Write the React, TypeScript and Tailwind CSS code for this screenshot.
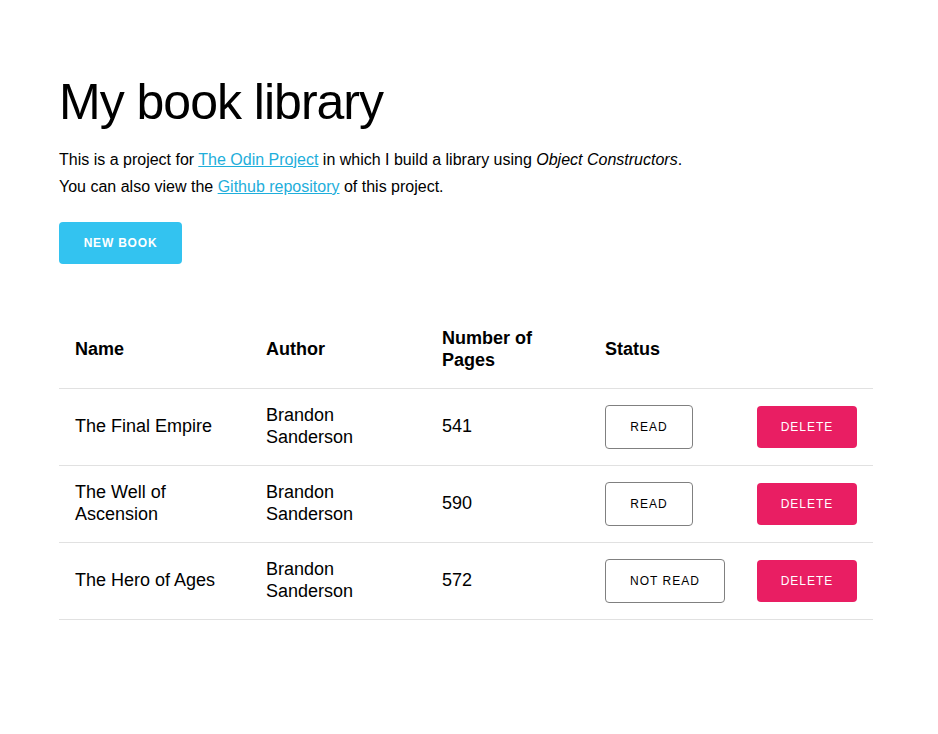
const books = [
  { title: "The Final Empire", author: "Brandon Sanderson", pages: 541, read: true },
  { title: "The Well of Ascension", author: "Brandon Sanderson", pages: 590, read: true },
  { title: "The Hero of Ages", author: "Brandon Sanderson", pages: 572, read: false },
];

export default function App() {
  return (
    <div className="min-h-screen bg-white text-black font-['Liberation_Sans',Arial,sans-serif]">
      <div className="w-[814px] ml-[59px] pt-[72px]">
        <h1 className="text-[50px] leading-[60px] tracking-[-1px] font-normal">My book library</h1>
        <p className="mt-[14px] text-base leading-[27px]">
          This is a project for{" "}
          <a href="#" className="text-[#1eaedb] underline">
            The Odin Project
          </a>{" "}
          in which I build a library using <em>Object Constructors</em>.
        </p>
        <p className="text-base leading-[27px]">
          You can also view the{" "}
          <a href="#" className="text-[#1eaedb] underline">
            Github repository
          </a>{" "}
          of this project.
        </p>

        <button className="mt-[22px] w-[123px] h-[42px] rounded bg-[#33c3f0] text-white text-[12px] font-bold tracking-[0.8px] uppercase">
          New book
        </button>

        <table className="mt-[48px] w-full table-fixed border-collapse text-[18px] leading-[22px]">
          <colgroup>
            <col className="w-[191px]" />
            <col className="w-[176px]" />
            <col className="w-[163px]" />
            <col className="w-[152px]" />
            <col className="w-[132px]" />
          </colgroup>
          <thead>
            <tr className="border-b border-[#e1e1e1]">
              <th className="px-4 pt-[15px] pb-[17px] text-left font-bold align-middle">Name</th>
              <th className="px-4 pt-[15px] pb-[17px] text-left font-bold align-middle">Author</th>
              <th className="px-4 pt-[15px] pb-[17px] text-left font-bold align-middle">Number of Pages</th>
              <th className="px-4 pt-[15px] pb-[17px] text-left font-bold align-middle">Status</th>
              <th className="px-4 pt-[15px] pb-[17px]"></th>
            </tr>
          </thead>
          <tbody>
            {books.map((b) => (
              <tr key={b.title} className="border-b border-[#e1e1e1]">
                <td className="px-4 pt-[15px] pb-[17px] align-middle">{b.title}</td>
                <td className="px-4 pt-[15px] pb-[17px] align-middle">{b.author}</td>
                <td className="px-4 pt-[15px] pb-[17px] align-middle">{b.pages}</td>
                <td className="px-4 py-4 align-middle">
                  <button
                    className={`h-[44px] rounded border border-[#808080] bg-white text-[12px] tracking-[1px] uppercase text-black ${
                      b.read ? "w-[88px]" : "w-[120px]"
                    }`}
                  >
                    {b.read ? "Read" : "Not read"}
                  </button>
                </td>
                <td className="px-4 py-4 align-middle">
                  <button className="w-[100px] h-[42px] rounded bg-[#e91e63] text-white text-[12px] tracking-[1px] uppercase">
                    Delete
                  </button>
                </td>
              </tr>
            ))}
          </tbody>
        </table>
      </div>
    </div>
  );
}
